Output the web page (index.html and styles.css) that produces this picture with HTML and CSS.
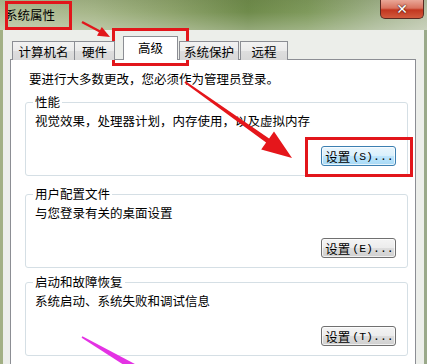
FILE: index.html
```html
<!DOCTYPE html>
<html lang="zh-CN">
<head>
<meta charset="utf-8">
<title>系统属性</title>
<link rel="stylesheet" href="styles.css">
</head>
<body>
<div class="window">
  <div class="titlebar">
    <span class="title">系统属性</span>
    <div class="close-btn"><span class="close-x">✕</span></div>
  </div>
  <div class="client">
    <div class="tabs">
      <div class="tab tab-1">计算机名</div>
      <div class="tab tab-2">硬件</div>
      <div class="tab tab-sel">高级</div>
      <div class="tab tab-4">系统保护</div>
      <div class="tab tab-5">远程</div>
    </div>
    <div class="panel">
      <p class="intro">要进行大多数更改，您必须作为管理员登录。</p>
      <fieldset class="group group-1">
        <legend>性能</legend>
        <p class="desc">视觉效果，处理器计划，内存使用，以及虚拟内存</p>
        <div class="btn-row"><button class="btn btn-focus">设置<span class="acc">(S)...</span></button></div>
      </fieldset>
      <fieldset class="group group-2">
        <legend>用户配置文件</legend>
        <p class="desc">与您登录有关的桌面设置</p>
        <div class="btn-row"><button class="btn">设置<span class="acc">(E)...</span></button></div>
      </fieldset>
      <fieldset class="group group-3">
        <legend>启动和故障恢复</legend>
        <p class="desc">系统启动、系统失败和调试信息</p>
        <div class="btn-row"><button class="btn">设置<span class="acc">(T)...</span></button></div>
      </fieldset>
    </div>
  </div>
</div>
<svg class="annot" width="427" height="364" viewBox="0 0 427 364" xmlns="http://www.w3.org/2000/svg">
  <rect x="6.5" y="2.5" width="64" height="26" fill="none" stroke="#e2161b" stroke-width="3"/>
  <rect x="113.5" y="29.5" width="74" height="35" fill="none" stroke="#e2161b" stroke-width="3"/>
  <rect x="306.5" y="138.5" width="105" height="37" fill="none" stroke="#e2161b" stroke-width="3"/>
  <line x1="82" y1="22" x2="100" y2="31.5" stroke="#e2161b" stroke-width="2.5"/>
  <polygon points="110,37 97,35.8 101.8,27" fill="#e2161b"/>
  <polygon points="184.4,82.8 266.1,142.5 261.2,149.4 292,158 274,131.6 269.1,138.5 185.6,81.2" fill="#e5161b"/>
  <polygon points="81.6,337.7 133.2,371 136.8,365 82.4,336.3" fill="#e432e4"/>
</svg>
</body>
</html>
```
FILE: styles.css
```css
html, body {
  margin: 0;
  padding: 0;
}
body {
  width: 427px;
  height: 364px;
  overflow: hidden;
  position: relative;
  background: #eef0ec;
  font-family: "Noto Sans CJK SC", "Noto Sans", sans-serif;
  font-size: 12.5px;
  color: #000;
}
.window {
  height: 364px;
  border-left: 3px solid #a2b084;
  border-right: 3px solid #9aa98a;
  box-sizing: border-box;
  background: #eceeea;
}
.titlebar {
  height: 30px;
  display: flex;
  align-items: flex-start;
  margin-left: -3px;
  margin-right: -3px;
  background:
    linear-gradient(180deg, rgba(80,100,50,0.15) 0%, rgba(255,255,255,0) 40%, rgba(255,255,255,0.25) 100%),
    linear-gradient(90deg, #b3bf98 0%, #a7b78a 22%, #8ea36c 40%, #6f8b4b 58%, #7f9a5c 72%, #a2b38c 88%, #b9c3a8 100%);
}
.title {
  margin-left: 5px;
  margin-top: 6px;
  line-height: 18px;
  color: #000;
}
.close-btn {
  margin-left: auto;
  margin-right: 3px;
  width: 44px;
  height: 19px;
  box-sizing: border-box;
  border: 1px solid #5a2a22;
  border-top: none;
  border-radius: 0 0 5px 5px;
  background: linear-gradient(180deg, #e9a797 0%, #d9735f 45%, #c2361f 55%, #d25a3d 100%);
  display: flex;
  align-items: center;
  justify-content: center;
}
.close-x {
  color: #fff;
  font-family: "DejaVu Sans", sans-serif;
  font-weight: bold;
  font-size: 14px;
  line-height: 14px;
  text-shadow: 0 0 2px #4a1a10, 0 0 1px #4a1a10;
}
.client {
  padding: 7px 9px 0 7px;
}
.tabs {
  display: flex;
  align-items: flex-end;
  height: 23px;
  margin-left: 2px;
  position: relative;
  z-index: 1;
  margin-bottom: -1px;
}
.tab {
  height: 19px;
  box-sizing: border-box;
  border: 1px solid #8c8e94;
  border-bottom: none;
  background: linear-gradient(180deg, #f2f2f2 0%, #ebebeb 50%, #dedede 51%, #d8d8d8 100%);
  line-height: 19px;
  text-align: center;
  color: #000;
}
.tab-1 { width: 63px; }
.tab-2 { width: 41px; margin-left: -1px; }
.tab-sel {
  width: 55px;
  height: 24px;
  margin-left: 8px;
  background: #fff;
  line-height: 22px;
}
.tab-4 { width: 60px; margin-left: 1px; }
.tab-5 { width: 48px; margin-left: 1px; }
.panel {
  width: 406px;
  height: 320px;
  box-sizing: border-box;
  border: 1px solid #8c8e94;
  background: #fff;
  padding: 11px 7px 0 14px;
}
.intro {
  margin: 0 0 0 4px;
  line-height: 16px;
}
.group {
  margin: 7px 0 0 0;
  padding: 0 11px 9px 9px;
  border: 1px solid #d5dfe5;
  border-radius: 3px;
  min-width: 0;
}
.group-2 { margin-top: 10px; }
.group-3 { margin-top: 6px; }
.group legend {
  padding: 0 2px;
  margin-left: -2px;
  line-height: 16px;
}
.desc {
  margin: 3px 0 0 0;
  line-height: 16px;
}
.btn-row {
  display: flex;
  justify-content: flex-end;
  margin-top: 17px;
}
.btn {
  width: 75px;
  height: 20px;
  padding: 0 0 0 2px;
  box-sizing: border-box;
  border: 1px solid #707070;
  border-radius: 3px;
  background: linear-gradient(180deg, #f4f4f4 0%, #ececec 50%, #dddddd 51%, #d0d0d0 100%);
  font-family: "Noto Sans CJK SC", sans-serif;
  font-size: 12.5px;
  line-height: 17px;
  color: #000;
  display: flex;
  align-items: center;
  justify-content: center;
  box-shadow: inset 0 0 0 1px rgba(255,255,255,0.7);
}
.btn-focus {
  border-color: #3c7fb1;
  background: linear-gradient(180deg, #eaf6fd 0%, #d9f0fc 50%, #bee6fd 51%, #a7d9f5 100%);
}
.acc {
  font-family: "Liberation Mono", monospace;
  font-size: 11.5px;
  margin-left: 2px;
}
.annot {
  position: absolute;
  left: 0;
  top: 0;
  pointer-events: none;
}
```
